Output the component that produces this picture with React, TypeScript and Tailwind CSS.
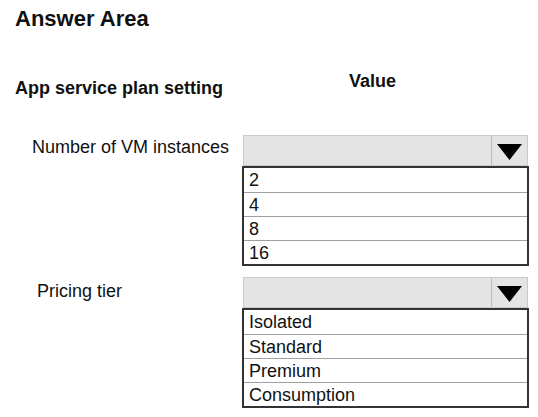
const vmOptions = ["2", "4", "8", "16"];
const tierOptions = ["Isolated", "Standard", "Premium", "Consumption"];

function Dropdown({ options }: { options: string[] }) {
  return (
    <div className="w-[287px]">
      <div className="mx-px flex h-[31px] border border-[#c9c9c9] bg-[#e4e4e4]">
        <div className="flex-1" />
        <div className="flex w-[36px] items-center justify-center border-l border-[#bdbdbd]">
          <svg width="25" height="16" viewBox="0 0 25 16" className="mt-[2px]">
            <polygon points="0,0 25,0 12.5,16" fill="#000" />
          </svg>
        </div>
      </div>
      <div className="border-2 border-[#333]">
        {options.map((opt, i) => (
          <div
            key={opt}
            className={
              "h-[24px] pl-[5px] text-[18px] leading-[24px] " +
              (i > 0 ? "border-t border-[#a0a0a0] leading-[23px]" : "")
            }
          >
            {opt}
          </div>
        ))}
      </div>
    </div>
  );
}

export default function App() {
  return (
    <div className="h-[417px] w-[538px] overflow-hidden bg-white font-['Liberation_Sans',Arial,sans-serif] text-[#111]">
      <h1 className="pl-[15px] pt-[8px] text-[22px] font-bold leading-[22px]">Answer Area</h1>

      <div className="mt-[42px] flex items-start">
        <div className="w-[349px] pl-[15px] pt-[7px] text-[18px] font-bold leading-[18px]">
          App service plan setting
        </div>
        <div className="text-[18px] font-bold leading-[18px]">Value</div>
      </div>

      <div className="mt-[38px] flex items-start">
        <div className="w-[242px] pl-[32px] pt-[3px] text-[18px] leading-[18px]">Number of VM instances</div>
        <Dropdown options={vmOptions} />
      </div>

      <div className="mt-[11px] flex items-start">
        <div className="w-[242px] pl-[37px] pt-[5px] text-[18px] leading-[18px]">Pricing tier</div>
        <Dropdown options={tierOptions} />
      </div>
    </div>
  );
}
